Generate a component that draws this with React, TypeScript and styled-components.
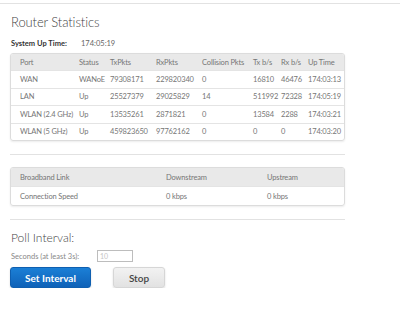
import React from "react";
import styled, { createGlobalStyle } from "styled-components";

const GlobalStyle = createGlobalStyle`
  body {
    margin: 0;
    background: #fff;
    font-family: Lato, "Open Sans", sans-serif;
    color: #666;
  }
`;

type PortRow = {
  port: string;
  status: string;
  tx: string;
  rx: string;
  coll: string;
  txb: string;
  rxb: string;
  up: string;
};

const ports: PortRow[] = [
  { port: "WAN", status: "WANoE", tx: "79308171", rx: "229820340", coll: "0", txb: "16810", rxb: "46476", up: "174:03:13" },
  { port: "LAN", status: "Up", tx: "25527379", rx: "29025829", coll: "14", txb: "511992", rxb: "72328", up: "174:05:19" },
  { port: "WLAN (2.4 GHz)", status: "Up", tx: "13535261", rx: "2871821", coll: "0", txb: "13584", rxb: "2288", up: "174:03:21" },
  { port: "WLAN (5 GHz)", status: "Up", tx: "459823650", rx: "97762162", coll: "0", txb: "0", rxb: "0", up: "174:03:20" },
];

const portCols = [66, 31, 46, 46, 51, 28, 27, 40];
const linkCols = [153, 101, 81];

const Page = styled.div`
  margin-top: 3px;
  border-top: 1px solid #e2e2e2;
  padding: 9px 55px 0 10px;
`;

const Title = styled.h1`
  margin: 0 0 0 1px;
  font-size: 13px;
  font-weight: 300;
  color: #444;
  line-height: 18px;
  letter-spacing: -0.1px;
`;

const UpTime = styled.div`
  display: flex;
  margin: 7px 0 0 1px;
  font-size: 7.5px;
  line-height: 11px;
  color: #666;
`;

const UpLabel = styled.span`
  width: 70px;
  font-weight: 700;
  color: #333;
`;

const Card = styled.div<{ $gap: number }>`
  margin-top: ${({ $gap }) => $gap}px;
  border: 1px solid #dcdcdc;
  border-radius: 3px;
  box-shadow: 0 1px 2px rgba(0, 0, 0, 0.08);
  overflow: hidden;
`;

const Table = styled.table`
  width: 100%;
  border-collapse: collapse;
  table-layout: fixed;
  font-size: 7.5px;
  letter-spacing: -0.15px;
  color: #767676;
`;

const HeadCell = styled.th<{ $h: number }>`
  height: ${({ $h }) => $h}px;
  padding: 0 0 0 2px;
  background: #e9e9e9;
  font-weight: 400;
  text-align: left;
  white-space: nowrap;
  &:first-child {
    padding-left: 9px;
  }
`;

const Cell = styled.td<{ $h: number }>`
  height: ${({ $h }) => $h}px;
  padding: 0 0 0 2px;
  border-top: 1px solid #e4e4e4;
  white-space: nowrap;
  &:first-child {
    padding-left: 9px;
  }
`;

const Divider = styled.hr<{ $top: number }>`
  margin: ${({ $top }) => $top}px 0 0;
  border: 0;
  border-top: 1px solid #e2e2e2;
`;

const Subtitle = styled.h2`
  margin: 9px 0 0 1px;
  font-size: 12px;
  font-weight: 300;
  color: #444;
  line-height: 17px;
`;

const Field = styled.div`
  display: flex;
  align-items: center;
  margin: 4px 0 0 1px;
  font-size: 7.5px;
  color: #888;
`;

const FieldLabel = styled.span`
  width: 86px;
`;

const Input = styled.input`
  box-sizing: border-box;
  width: 36px;
  height: 12px;
  padding: 0 2px;
  border: 1px solid #bdbdbd;
  font-family: inherit;
  font-size: 7px;
  color: #aaa;
  outline: none;
  &::placeholder {
    color: #c5c5c5;
  }
`;

const Buttons = styled.div`
  display: flex;
  gap: 22px;
  margin-top: 5px;
`;

const Button = styled.button<{ $primary?: boolean }>`
  box-sizing: border-box;
  height: 21px;
  width: ${({ $primary }) => ($primary ? 81 : 52)}px;
  border-radius: 3px;
  border: 1px solid ${({ $primary }) => ($primary ? "#0f5fb0" : "#d6d6d6")};
  background: ${({ $primary }) =>
    $primary
      ? "linear-gradient(#1b7fd6, #0f62b8)"
      : "linear-gradient(#f2f2f2, #e2e2e2)"};
  color: ${({ $primary }) => ($primary ? "#fff" : "#444")};
  font-family: inherit;
  font-size: 10px;
  font-weight: ${({ $primary }) => ($primary ? 700 : 600)};
  box-shadow: 0 1px 2px rgba(0, 0, 0, 0.15);
`;

const ColGroup = ({ widths }: { widths: number[] }) => (
  <colgroup>
    {widths.map((w, i) => (
      <col key={i} style={{ width: w }} />
    ))}
  </colgroup>
);

export default function App() {
  return (
    <>
      <GlobalStyle />
      <Page>
        <Title>Router Statistics</Title>
        <UpTime>
          <UpLabel>System Up Time:</UpLabel>
          <span>174:05:19</span>
        </UpTime>

        <Card $gap={4}>
          <Table>
            <ColGroup widths={portCols} />
            <thead>
              <tr>
                {["Port", "Status", "TxPkts", "RxPkts", "Collision Pkts", "Tx b/s", "Rx b/s", "Up Time"].map((h) => (
                  <HeadCell key={h} $h={16}>
                    {h}
                  </HeadCell>
                ))}
              </tr>
            </thead>
            <tbody>
              {ports.map((r) => (
                <tr key={r.port}>
                  {[r.port, r.status, r.tx, r.rx, r.coll, r.txb, r.rxb, r.up].map((v, i) => (
                    <Cell key={i} $h={16.5}>
                      {v}
                    </Cell>
                  ))}
                </tr>
              ))}
            </tbody>
          </Table>
        </Card>

        <Divider $top={13} />

        <Card $gap={12}>
          <Table>
            <ColGroup widths={linkCols} />
            <thead>
              <tr>
                <HeadCell $h={18}>Broadband Link</HeadCell>
                <HeadCell $h={18}>Downstream</HeadCell>
                <HeadCell $h={18}>Upstream</HeadCell>
              </tr>
            </thead>
            <tbody>
              <tr>
                <Cell $h={18}>Connection Speed</Cell>
                <Cell $h={18}>0 kbps</Cell>
                <Cell $h={18}>0 kbps</Cell>
              </tr>
            </tbody>
          </Table>
        </Card>

        <Divider $top={13} />

        <Subtitle>Poll Interval:</Subtitle>
        <Field>
          <FieldLabel>Seconds (at least 3s):</FieldLabel>
          <Input placeholder="10" />
        </Field>
        <Buttons>
          <Button $primary>Set Interval</Button>
          <Button>Stop</Button>
        </Buttons>
      </Page>
    </>
  );
}
